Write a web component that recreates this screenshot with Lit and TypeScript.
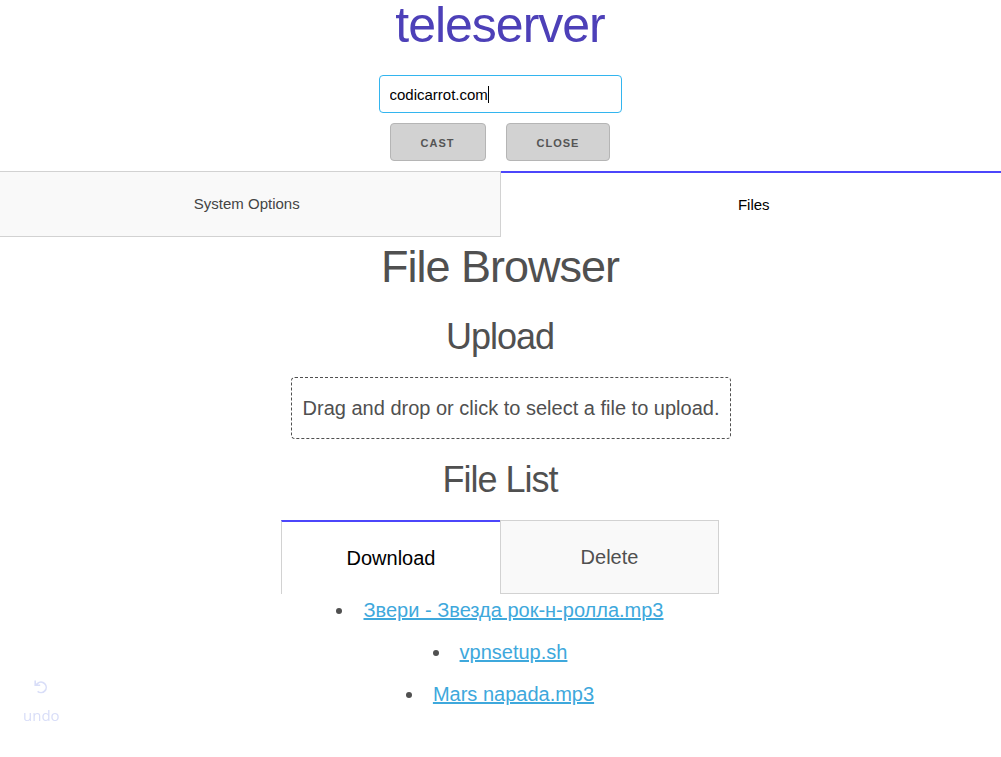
import { LitElement, html, css } from "lit";
import { customElement, state } from "lit/decorators.js";

@customElement("app-root")
export class AppRoot extends LitElement {
  static styles = css`
    :host {
      display: block;
      min-height: 100vh;
      background: #fff;
      color: #505050;
      font-family: "Liberation Sans", Arial, sans-serif;
      font-size: 15px;
      line-height: 24px;
      text-align: center;
    }
    * { box-sizing: border-box; }
    h1, h2, h3 { margin: 0; font-weight: 300; letter-spacing: -1px; }
    h1 { font-size: 50px; line-height: 50px; color: #4d40b8; margin-bottom: 25px; padding-right: 1px; }
    h2 { font-size: 45px; line-height: 58px; }
    h3 { font-size: 36px; line-height: 48px; margin: 17px 0 16px; }
    form {
      display: flex;
      flex-direction: column;
      align-items: center;
      gap: 10px;
      margin-bottom: 10px;
      padding-right: 1px;
    }
    .field { position: relative; display: flex; }
    .address {
      width: 243px;
      height: 38px;
      padding: 6px 10px;
      border: 1px solid #33b5ef;
      border-radius: 4px;
      outline: 0;
      background: #fff;
      color: #000;
      font: inherit;
      caret-color: transparent;
    }
    .caret {
      position: absolute;
      left: 109px;
      top: 11px;
      width: 1px;
      height: 17px;
      background: #000;
      pointer-events: none;
    }
    .address.edited { caret-color: #000; }
    .edited + .caret { display: none; }
    .actions { display: flex; gap: 20px; }
    .action {
      height: 38px;
      padding: 0 30px;
      border: 1px solid #b5b5b5;
      border-radius: 4px;
      background: #d2d2d2;
      color: #555;
      font: 600 11px/38px "Liberation Sans", Arial, sans-serif;
      letter-spacing: 1px;
    }
    .tabs { display: grid; grid-template-columns: 1fr 1fr; }
    .tab {
      appearance: none;
      margin: 0;
      border: 1px solid #d2d2d2;
      border-radius: 0;
      background: #f9f9f9;
      color: #444;
      font: inherit;
    }
    .tab.active { border-top: 2px solid #4c46fb; border-bottom: 0; background: #fff; color: #000; }
    .page .tab { height: 66px; border-left: 0; padding: 0 6px 0 0; }
    .page .tab:last-child { border-right: 0; padding: 0 0 0 6px; }
    .files {
      display: flex;
      flex-direction: column;
      align-items: center;
      padding: 1px 1px 0 0;
      font-size: 20px;
      line-height: 32px;
    }
    .drop {
      margin-left: 22px;
      padding: 14px 11px;
      border: 1px dashed #505050;
      border-radius: 4px;
      cursor: pointer;
    }
    .drop input { display: none; }
    .list { width: 438px; max-width: 100%; }
    .list .tab { height: 74px; color: #505050; }
    .list .tab.active { color: #000; border-right: 0; }
    ul { margin: 0; padding: 0; list-style: disc inside; }
    li { margin-bottom: 10px; }
    a { color: #3ea8dc; }
    .undo {
      position: fixed;
      left: 23px;
      bottom: 30px;
      display: flex;
      flex-direction: column;
      align-items: center;
      gap: 8px;
      padding: 0;
      border: 0;
      background: none;
      color: #d9def8;
      font: 15px/24px "Open Sans", sans-serif;
    }
    .undo svg { display: block; width: 16px; height: 16px; }
  `;

  @state() private page = "Files";
  @state() private mode = "Download";
  @state() private edited = false;

  private files = ["Звери - Звезда рок-н-ролла.mp3", "vpnsetup.sh", "Mars napada.mp3"];

  firstUpdated() {
    const field = this.renderRoot.querySelector<HTMLInputElement>(".address");
    field?.focus();
    field?.setSelectionRange(field.value.length, field.value.length);
  }

  private tab(name: string, current: string, pick: (name: string) => void) {
    return html`<button
      class="tab ${name === current ? "active" : ""}"
      role="tab"
      aria-selected=${name === current ? "true" : "false"}
      @click=${() => pick(name)}
    >${name}</button>`;
  }

  private edit = () => (this.edited = true);

  render() {
    return html`
      <h1>teleserver</h1>
      <form @submit=${(e: Event) => e.preventDefault()}>
        <div class="field">
          <input
            class="address ${this.edited ? "edited" : ""}"
            type="text"
            aria-label="Address"
            value="codicarrot.com"
            spellcheck="false"
            @keydown=${this.edit}
            @pointerdown=${this.edit}
            @blur=${this.edit}
          /><span class="caret"></span>
        </div>
        <div class="actions">
          <button class="action" type="submit">CAST</button>
          <button class="action" type="button">CLOSE</button>
        </div>
      </form>
      <div class="tabs page" role="tablist">
        ${["System Options", "Files"].map((n) => this.tab(n, this.page, (v) => (this.page = v)))}
      </div>
      <main class="files">
        <h2>File Browser</h2>
        <h3>Upload</h3>
        <label class="drop">Drag and drop or click to select a file to upload.<input type="file" /></label>
        <h3>File List</h3>
        <section class="list">
          <div class="tabs" role="tablist">
            ${["Download", "Delete"].map((n) => this.tab(n, this.mode, (v) => (this.mode = v)))}
          </div>
          <ul>
            ${this.files.map((f) => html`<li><a href="#${f}">${f}</a></li>`)}
          </ul>
        </section>
      </main>
      <button class="undo">
        <svg viewBox="0 0 16 16" fill="none" stroke="currentColor" stroke-width="1.6" aria-hidden="true">
          <path d="M2.2 1.5v4.7h5M2.6 6L4.4 4.6A5.2 5.2 0 1 1 4.6 12.3" />
        </svg>
        undo
      </button>
    `;
  }
}
